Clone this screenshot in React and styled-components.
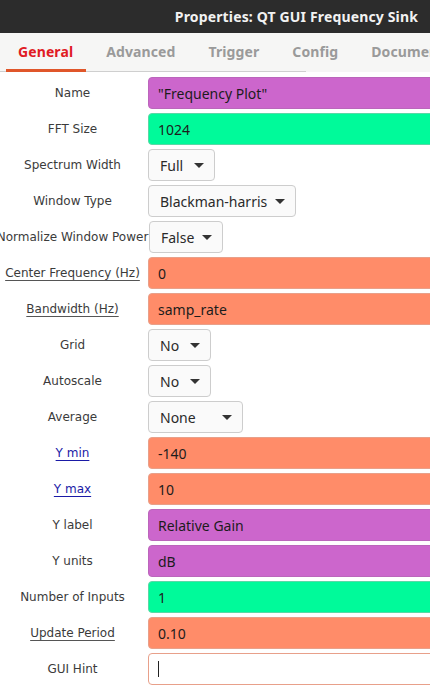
import React from 'react'
import styled, { createGlobalStyle } from 'styled-components'

const GlobalStyle = createGlobalStyle`
  html, body {
    margin: 0;
    padding: 0;
    background: #ffffff;
    overflow: hidden;
  }
`;

const Window = styled.div`
  width: 430px;
  height: 688px;
  overflow: hidden;
  display: flex;
  flex-direction: column;
  background: #fff;
`;

const TitleBar = styled.header`
  height: 33px;
  flex-shrink: 0;
  background: #2c2c2c;
  display: flex;
  align-items: center;
  justify-content: flex-end;
  padding-right: 12px;
  color: #f2f2f2;
  font-family: "Noto Sans", "Open Sans", sans-serif;
  font-weight: 700;
  font-size: 14px;
  letter-spacing: 0.15px;
`;

const TabBar = styled.nav`
  height: 39px;
  flex-shrink: 0;
  background: #f6f6f5;
  display: flex;
  align-items: stretch;
  padding-left: 6px;
  gap: 8px;
  white-space: nowrap;
  position: relative;
  &::after {
    content: '';
    position: absolute;
    left: 0;
    bottom: 0;
    width: 306px;
    height: 1px;
    background: #cfcfcf;
  }
`;

const Tab = styled.div`
  display: flex;
  align-items: center;
  padding: 0 13px 0 12px;
  font-family: "Noto Sans", "Open Sans", sans-serif;
  font-weight: 700;
  font-size: 14px;
  letter-spacing: 0.1px;
  color: ${p => (p.$active ? '#e01b24' : '#9a9a9a')};
  border-bottom: 3px solid ${p => (p.$active ? '#e0562a' : 'transparent')};
  z-index: 1;
`;

const Form = styled.div`
  padding-top: 3px;
  display: flex;
  flex-direction: column;
`;

const Row = styled.div`
  height: 36px;
  display: grid;
  grid-template-columns: 145px 1fr;
  align-items: center;
  column-gap: 3px;
`;

const Label = styled.div`
  display: flex;
  justify-content: center;
  white-space: nowrap;
  font-family: "DejaVu Sans", sans-serif;
  font-size: 12px;
  color: ${p => (p.$link ? '#1a1aa6' : '#3b3b3b')};
  span {
    text-decoration: ${p => (p.$under ? 'underline' : 'none')};
    text-decoration-color: ${p => (p.$link ? '#1a1aa6' : '#555')};
    text-underline-offset: 3px;
  }
`;

const Field = styled.div`
  height: 32px;
  box-sizing: border-box;
  width: 320px;
  border-radius: 4px;
  background: ${p => p.$bg};
  border: 1px solid ${p => p.$border};
  display: flex;
  align-items: center;
  padding-left: 9px;
  font-family: "Noto Sans", "Open Sans", sans-serif;
  font-size: 14px;
  color: #1c1c1c;
`;

const Cursor = styled.span`
  width: 1px;
  height: 16px;
  background: #222;
`;

const Select = styled.div`
  height: 32px;
  box-sizing: border-box;
  width: ${p => p.$w}px;
  margin-left: ${p => p.$ml || 0}px;
  border-radius: 4px;
  background: #fafafa;
  border: 1px solid #cdcdcd;
  display: flex;
  align-items: center;
  justify-content: space-between;
  padding: 0 10px 0 11px;
  font-family: "Noto Sans", "Open Sans", sans-serif;
  font-size: 14px;
  color: #2a2a2a;
`;

const Caret = styled.span`
  width: 0;
  height: 0;
  border-left: 5px solid transparent;
  border-right: 5px solid transparent;
  border-top: 5px solid #333;
`;

const colors = {
  string: ['#cc66cc', '#bb66bb'],
  int: ['#00fa9a', '#5ad8a6'],
  float: ['#ff8c69', '#e8a08a'],
  raw: ['#ffffff', '#e8a08a'],
};

const rows = [
  { label: 'Name', kind: 'string', value: '"Frequency Plot"' },
  { label: 'FFT Size', kind: 'int', value: '1024' },
  { label: 'Spectrum Width', select: 'Full', w: 67 },
  { label: 'Window Type', select: 'Blackman-harris', w: 148 },
  { label: 'Normalize Window Power', select: 'False', w: 74, ml: 1 },
  { label: 'Center Frequency (Hz)', kind: 'float', value: '0', under: true },
  { label: 'Bandwidth (Hz)', kind: 'float', value: 'samp_rate', under: true },
  { label: 'Grid', select: 'No', w: 63 },
  { label: 'Autoscale', select: 'No', w: 63 },
  { label: 'Average', select: 'None', w: 95 },
  { label: 'Y min', kind: 'float', value: '-140', under: true, link: true },
  { label: 'Y max', kind: 'float', value: '10', under: true, link: true },
  { label: 'Y label', kind: 'string', value: 'Relative Gain' },
  { label: 'Y units', kind: 'string', value: 'dB' },
  { label: 'Number of Inputs', kind: 'int', value: '1' },
  { label: 'Update Period', kind: 'float', value: '0.10', under: true },
  { label: 'GUI Hint', kind: 'raw', cursor: true },
];

export default function App() {
  return (
    <>
      <GlobalStyle />
      <Window>
        <TitleBar>Properties: QT GUI Frequency Sink</TitleBar>
        <TabBar>
          <Tab $active>General</Tab>
          <Tab>Advanced</Tab>
          <Tab>Trigger</Tab>
          <Tab>Config</Tab>
          <Tab>Documentation</Tab>
        </TabBar>
        <Form>
          {rows.map(r => (
            <Row key={r.label}>
              <Label $under={r.under} $link={r.link}>
                <span>{r.label}</span>
              </Label>
              {r.select ? (
                <div>
                  <Select $w={r.w} $ml={r.ml}>
                    {r.select}
                    <Caret />
                  </Select>
                </div>
              ) : (
                <Field $bg={colors[r.kind][0]} $border={colors[r.kind][1]}>
                  {r.cursor ? <Cursor /> : r.value}
                </Field>
              )}
            </Row>
          ))}
        </Form>
      </Window>
    </>
  )
}
